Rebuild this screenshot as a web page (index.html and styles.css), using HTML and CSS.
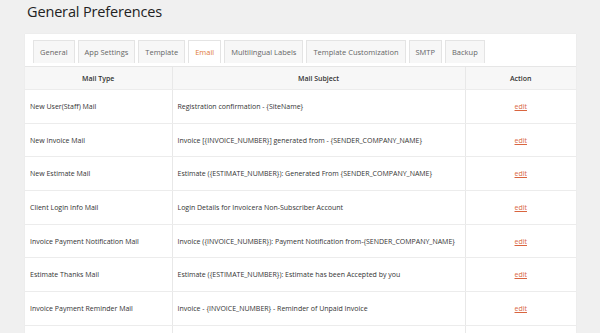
FILE: index.html
```html
<!DOCTYPE html>
<html lang="en">
<head>
  <meta charset="UTF-8">
  <title>General Preferences</title>
  <link rel="stylesheet" href="styles.css">
</head>
<body>
  <h1 class="page-title">General Preferences</h1>

  <div class="panel">
    <div class="tabs">
      <div class="tab">General</div>
      <div class="tab">App Settings</div>
      <div class="tab">Template</div>
      <div class="tab active">Email</div>
      <div class="tab">Multilingual Labels</div>
      <div class="tab">Template Customization</div>
      <div class="tab">SMTP</div>
      <div class="tab">Backup</div>
    </div>

    <table class="mail-table">
      <colgroup>
        <col class="col-type">
        <col>
        <col class="col-action">
      </colgroup>
      <thead>
        <tr>
          <th>Mail Type</th>
          <th>Mail Subject</th>
          <th>Action</th>
        </tr>
      </thead>
      <tbody>
        <tr>
          <td>New User(Staff) Mail</td>
          <td>Registration confirmation - {SiteName}</td>
          <td class="action"><a href="#">edit</a></td>
        </tr>
        <tr>
          <td>New Invoice Mail</td>
          <td>Invoice [{INVOICE_NUMBER}] generated from - {SENDER_COMPANY_NAME}</td>
          <td class="action"><a href="#">edit</a></td>
        </tr>
        <tr>
          <td>New Estimate Mail</td>
          <td>Estimate ({ESTIMATE_NUMBER}): Generated From {SENDER_COMPANY_NAME}</td>
          <td class="action"><a href="#">edit</a></td>
        </tr>
        <tr>
          <td>Client Login Info Mail</td>
          <td>Login Details for Invoicera Non-Subscriber Account</td>
          <td class="action"><a href="#">edit</a></td>
        </tr>
        <tr>
          <td>Invoice Payment Notification Mail</td>
          <td>Invoice ({INVOICE_NUMBER}): Payment Notification from-{SENDER_COMPANY_NAME}</td>
          <td class="action"><a href="#">edit</a></td>
        </tr>
        <tr>
          <td>Estimate Thanks Mail</td>
          <td>Estimate ({ESTIMATE_NUMBER}): Estimate has been Accepted by you</td>
          <td class="action"><a href="#">edit</a></td>
        </tr>
        <tr>
          <td>Invoice Payment Reminder Mail</td>
          <td>Invoice - {INVOICE_NUMBER} - Reminder of Unpaid Invoice</td>
          <td class="action"><a href="#">edit</a></td>
        </tr>
        <tr>
          <td>&nbsp;</td>
          <td>&nbsp;</td>
          <td class="action">&nbsp;</td>
        </tr>
      </tbody>
    </table>
  </div>
</body>
</html>
```

FILE: styles.css
```css
body {
  margin: 0;
  padding: 0 24px 0 25px;
  background-color: #f0f0f0;
  color: #333;
  font-family: "Open Sans", sans-serif;
  overflow: hidden;
}
.page-title {
  margin: 0;
  padding: 2px 0 0 2px;
  height: 34px;
  box-sizing: border-box;
  font-size: 14.5px;
  font-weight: normal;
  color: #222;
  letter-spacing: -0.15px;
}
.panel {
  background-color: #fff;
  width: 551px;
  box-shadow: 0 0 1px rgba(0, 0, 0, 0.08);
}
.tabs {
  display: flex;
  gap: 3px;
  padding: 6px 8px 0 8px;
  height: 33px;
  box-sizing: border-box;
  border-bottom: 1px solid #e6e6e6;
}
.tab {
  height: 23px;
  line-height: 22px;
  padding: 0 6px;
  font-size: 7.5px;
  color: #666;
  background-color: #f7f7f7;
  border: 1px solid #e4e4e4;
  border-bottom: none;
  box-sizing: border-box;
}
.tab.active {
  background-color: #fff;
  color: #e07b3c;
}
.mail-table {
  width: 100%;
  table-layout: fixed;
  border-collapse: collapse;
  font-size: 7px;
}
.col-type {
  width: 147px;
}
.col-action {
  width: 111px;
}
.mail-table th {
  height: 22px;
  padding: 0 5px;
  background-color: #f7f7f7;
  font-weight: 600;
  color: #333;
  text-align: center;
  border-bottom: 1px solid #ececec;
}
.mail-table th + th,
.mail-table td + td {
  border-left: 1px solid #e8e8e8;
}
.mail-table td {
  height: 33.7px;
  padding: 0 5px;
  box-sizing: border-box;
  border-bottom: 1px solid #ececec;
  color: #333;
  white-space: nowrap;
}
.mail-table td.action {
  text-align: center;
}
.action a {
  color: #d9653f;
  text-decoration: underline;
}
```
